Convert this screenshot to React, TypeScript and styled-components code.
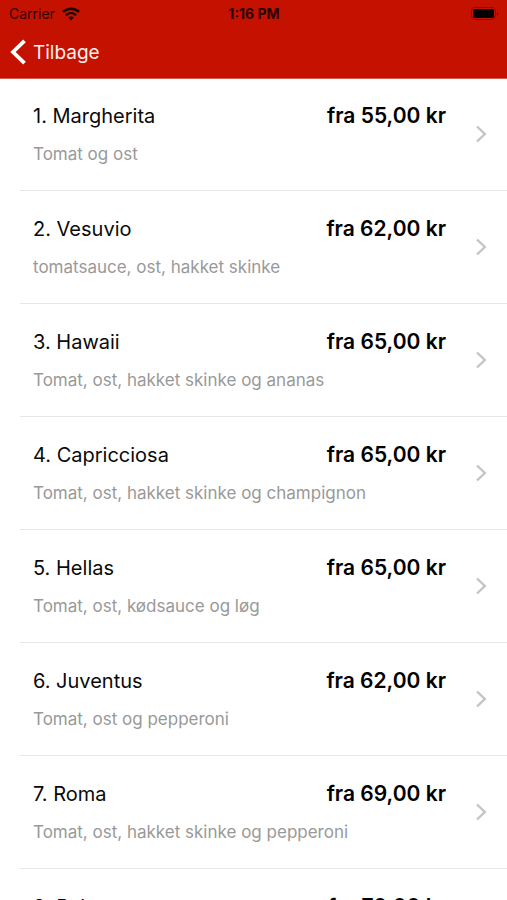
import React from "react";
import styled, { createGlobalStyle } from "styled-components";

const GlobalStyle = createGlobalStyle`
  * { box-sizing: border-box; }
  body { margin: 0; background: #fff; }
`;

const Screen = styled.div`
  display: flex;
  flex-direction: column;
  height: 100vh;
  overflow: hidden;
  background: #fff;
  color: #0a0a0a;
  font-family: Inter, "Liberation Sans", sans-serif;
`;

const Header = styled.header`
  position: relative;
  z-index: 1;
  flex: none;
  background: #c51200;
  box-shadow: 0 1px 0 #d65a50;
`;

const StatusBar = styled.div`
  display: grid;
  grid-template-columns: 1fr auto 1fr;
  align-items: center;
  height: 27px;
  padding: 0 8px 0 9px;
  color: #2a0300;
  font-size: 14px;
`;

const Carrier = styled.div`
  display: flex;
  align-items: center;
  gap: 7px;
`;

const Clock = styled.time`
  font-weight: 700;
`;

const BatteryIcon = styled.svg`
  justify-self: end;
`;

const NavBar = styled.nav`
  display: flex;
  align-items: center;
  height: 51px;
  padding: 0 10px;
`;

const BackButton = styled.button`
  display: flex;
  align-items: center;
  gap: 7px;
  padding: 0;
  border: 0;
  background: none;
  color: #fff0ec;
  font: inherit;
  font-size: 19px;
  cursor: pointer;
`;

const BackIcon = styled.svg`
  margin-bottom: 2px;
`;

const Menu = styled.ul`
  flex: 1;
  min-height: 0;
  margin: 0;
  padding: 0 0 0 20px;
  overflow-y: auto;
  scrollbar-width: none;
  list-style: none;
`;

const MenuRow = styled.li`
  border-bottom: 1px solid #e6e6e6;
`;

const RowButton = styled.button`
  display: flex;
  align-items: center;
  width: 100%;
  height: 112px;
  padding: 0 20px 0 13px;
  border: 0;
  background: none;
  color: inherit;
  font: inherit;
  text-align: left;
  cursor: pointer;
`;

const Details = styled.span`
  display: grid;
  grid-template-columns: 1fr auto;
  flex: 1;
  row-gap: 14px;
  margin-right: 29px;
`;

const Name = styled.span`
  font-size: 20px;
  line-height: 26px;
`;

const Price = styled.span`
  color: #000;
  font-size: 21px;
  line-height: 26px;
  font-weight: 600;
`;

const Description = styled.span`
  grid-column: 1 / -1;
  color: #999;
  font-size: 17px;
  line-height: 22px;
`;

const pizzas = [
  { name: "1. Margherita", price: "fra 55,00 kr", description: "Tomat og ost" },
  { name: "2. Vesuvio", price: "fra 62,00 kr", description: "tomatsauce, ost, hakket skinke" },
  { name: "3. Hawaii", price: "fra 65,00 kr", description: "Tomat, ost, hakket skinke og ananas" },
  { name: "4. Capricciosa", price: "fra 65,00 kr", description: "Tomat, ost, hakket skinke og champignon" },
  { name: "5. Hellas", price: "fra 65,00 kr", description: "Tomat, ost, kødsauce og løg" },
  { name: "6. Juventus", price: "fra 62,00 kr", description: "Tomat, ost og pepperoni" },
  { name: "7. Roma", price: "fra 69,00 kr", description: "Tomat, ost, hakket skinke og pepperoni" },
  { name: "8. Palermo", price: "fra 70,00 kr", description: "" },
];

export default function App() {
  return (
    <Screen>
      <GlobalStyle />
      <Header>
        <StatusBar>
          <Carrier>
            Carrier
            <svg width="18" height="14" viewBox="0 0 18 14" fill="none" stroke="#180000" strokeWidth="2.4" aria-hidden="true">
              <path d="M1 4.9C5.6 0.6 12.4 0.6 17 4.9" />
              <path d="M4 8.1C6.9 5.4 11.1 5.4 14 8.1" />
              <path d="M9 13.6L6.2 10.6C7.8 9.1 10.2 9.1 11.8 10.6Z" fill="#180000" stroke="none" />
            </svg>
          </Carrier>
          <Clock>1:16 PM</Clock>
          <BatteryIcon width="28" height="14" viewBox="0 0 28 14" aria-hidden="true">
            <rect x="0.5" y="0.5" width="24" height="12" rx="3" fill="none" stroke="#8c0d00" />
            <rect x="2" y="2" width="21" height="9" rx="1.5" fill="#000" />
            <path d="M26 5C27.6 5.4 27.6 8 26 8.4Z" fill="#6b0900" />
          </BatteryIcon>
        </StatusBar>
        <NavBar>
          <BackButton type="button">
            <BackIcon width="16" height="26" viewBox="0 0 16 26" fill="none" stroke="#fff" strokeWidth="3.8" aria-hidden="true">
              <path d="M14.5 1.8L3 13L14.5 24.2" />
            </BackIcon>
            Tilbage
          </BackButton>
        </NavBar>
      </Header>
      <Menu>
        {pizzas.map((pizza) => (
          <MenuRow key={pizza.name}>
            <RowButton type="button">
              <Details>
                <Name>{pizza.name}</Name>
                <Price>{pizza.price}</Price>
                <Description>{pizza.description || "\u00a0"}</Description>
              </Details>
              <svg width="12" height="18" viewBox="0 0 12 18" fill="none" stroke="#c4c4c7" strokeWidth="2.4" aria-hidden="true">
                <path d="M2 1.5L9.8 9L2 16.5" />
              </svg>
            </RowButton>
          </MenuRow>
        ))}
      </Menu>
    </Screen>
  );
}
